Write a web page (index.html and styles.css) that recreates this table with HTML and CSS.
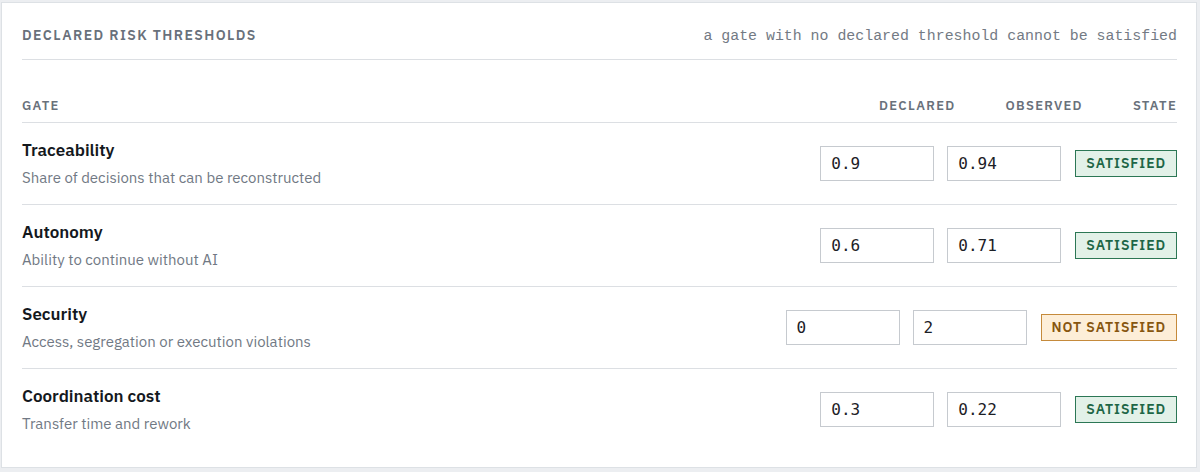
FILE: index.html
```html
<!DOCTYPE html>
<html lang="en">
<head>
<meta charset="utf-8">
<title>Declared risk thresholds</title>
<link rel="stylesheet" href="styles.css">
</head>
<body>
<section class="panel">
  <header class="panel-head">
    <h2 class="panel-title">DECLARED RISK THRESHOLDS</h2>
    <p class="panel-note">a gate with no declared threshold cannot be satisfied</p>
  </header>
  <div class="cols">
    <span class="col-gate">GATE</span>
    <div class="col-right">
      <span>DECLARED</span>
      <span>OBSERVED</span>
      <span>STATE</span>
    </div>
  </div>
  <div class="row">
    <div class="gate">
      <div class="gate-name">Traceability</div>
      <div class="gate-desc">Share of decisions that can be reconstructed</div>
    </div>
    <div class="controls">
      <input class="val" type="text" value="0.9">
      <input class="val" type="text" value="0.94">
      <span class="badge ok">SATISFIED</span>
    </div>
  </div>
  <div class="row">
    <div class="gate">
      <div class="gate-name">Autonomy</div>
      <div class="gate-desc">Ability to continue without AI</div>
    </div>
    <div class="controls">
      <input class="val" type="text" value="0.6">
      <input class="val" type="text" value="0.71">
      <span class="badge ok">SATISFIED</span>
    </div>
  </div>
  <div class="row">
    <div class="gate">
      <div class="gate-name">Security</div>
      <div class="gate-desc">Access, segregation or execution violations</div>
    </div>
    <div class="controls">
      <input class="val" type="text" value="0">
      <input class="val" type="text" value="2">
      <span class="badge bad">NOT SATISFIED</span>
    </div>
  </div>
  <div class="row last">
    <div class="gate">
      <div class="gate-name">Coordination cost</div>
      <div class="gate-desc">Transfer time and rework</div>
    </div>
    <div class="controls">
      <input class="val" type="text" value="0.3">
      <input class="val" type="text" value="0.22">
      <span class="badge ok">SATISFIED</span>
    </div>
  </div>
</section>
</body>
</html>
```
FILE: styles.css
```css
html, body {
  margin: 0;
  padding: 0;
}
body {
  background: #eceef1;
  padding: 2px 3px 2px 1px;
  font-family: "IBM Plex Sans", Inter, "Noto Sans", sans-serif;
  color: #161a1f;
}
.panel {
  background: #ffffff;
  border: 1px solid #dde1e5;
  padding: 22px 19px 18px 20px;
  height: 466px;
  box-sizing: border-box;
}
.panel-head {
  display: flex;
  justify-content: space-between;
  align-items: center;
  padding-bottom: 14px;
  border-bottom: 1px solid #dcdfe3;
}
.panel-title {
  margin: 0;
  font-size: 14px;
  line-height: 20px;
  font-weight: 600;
  letter-spacing: 1.4px;
  color: #69717b;
}
.panel-note {
  margin: 0;
  font-family: "Liberation Mono", "DejaVu Sans Mono", monospace;
  font-size: 14.9px;
  line-height: 20px;
  color: #737a84;
  position: relative;
  top: 1px;
}
.cols {
  display: flex;
  justify-content: space-between;
  align-items: center;
  padding: 38px 0 8px;
  border-bottom: 1px solid #dcdfe3;
  font-size: 13px;
  line-height: 16px;
  font-weight: 600;
  letter-spacing: 1.3px;
  color: #69717b;
}
.col-right {
  display: flex;
  gap: 50px;
}
.row {
  display: flex;
  justify-content: space-between;
  align-items: center;
  padding: 16px 0;
  border-bottom: 1px solid #dcdfe3;
}
.row.last {
  border-bottom: none;
}
.gate-name {
  font-size: 17px;
  line-height: 22px;
  font-weight: 600;
  color: #14181d;
}
.gate-desc {
  margin-top: 7px;
  font-size: 15px;
  line-height: 20px;
  color: #717984;
}
.controls {
  display: flex;
  align-items: center;
  gap: 13px;
}
.val {
  width: 114px;
  height: 35px;
  box-sizing: border-box;
  border: 1px solid #c6cacf;
  border-radius: 0;
  padding: 0 10px;
  font-family: "DejaVu Sans Mono", "Liberation Mono", monospace;
  font-size: 16px;
  color: #1c2026;
  background: #fff;
  outline: none;
}
.controls .badge {
  margin-left: 1px;
}
.badge {
  display: inline-block;
  height: 27px;
  line-height: 25px;
  box-sizing: border-box;
  padding: 0 10px;
  font-size: 14px;
  font-weight: 600;
  letter-spacing: 0.9px;
  border: 1px solid;
}
.badge.ok {
  background: #e2f1e8;
  border-color: #2c7755;
  color: #1d6646;
}
.badge.bad {
  background: #fdeed8;
  border-color: #c58a3b;
  color: #87560f;
}
```
